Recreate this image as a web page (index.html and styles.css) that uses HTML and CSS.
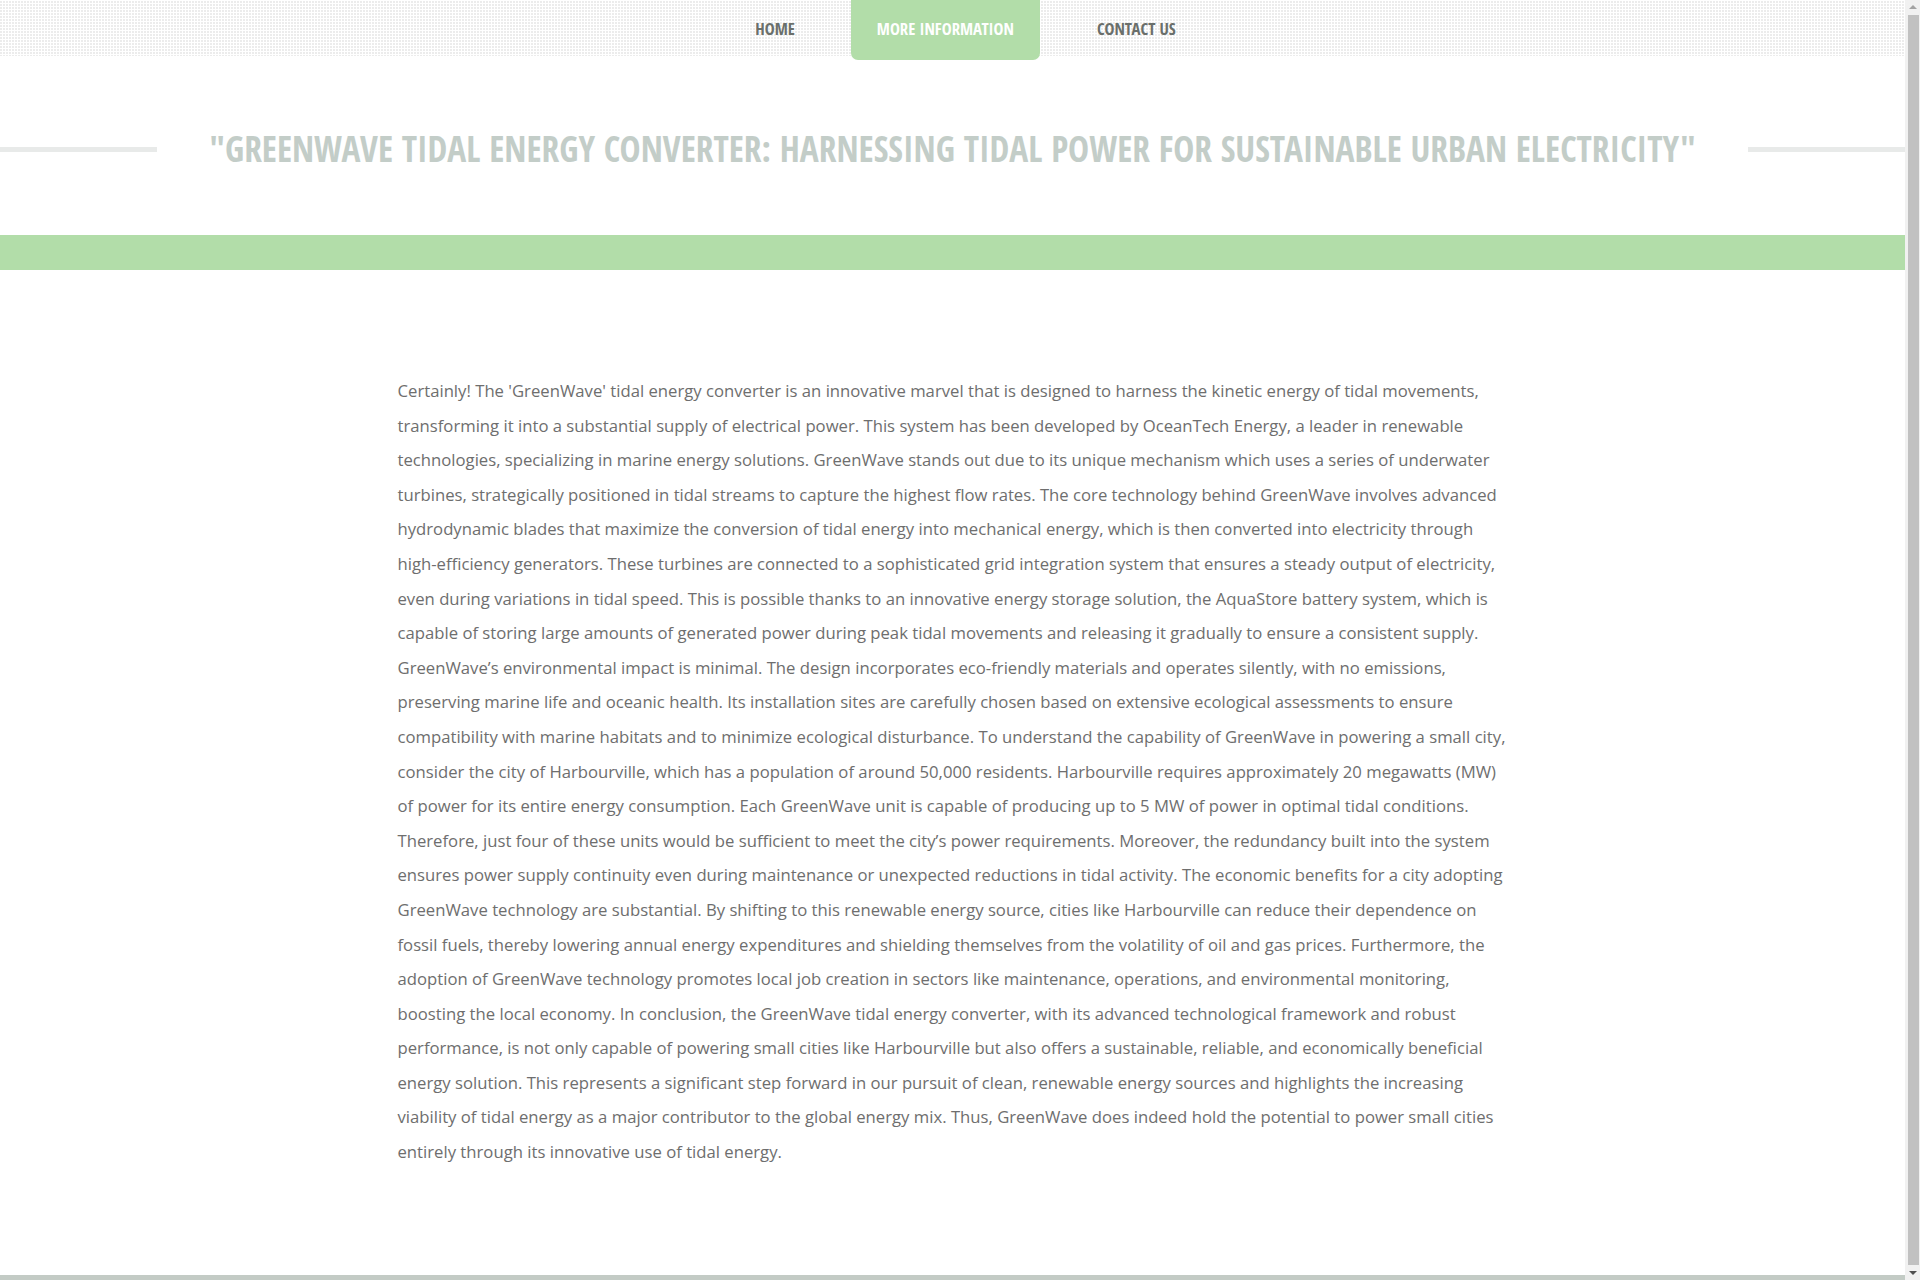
FILE: index.html
```html
<!DOCTYPE html>
<html lang="en">
<head>
<meta charset="utf-8">
<title>GreenWave Tidal Energy Converter</title>
<link rel="stylesheet" href="styles.css">
</head>
<body>
<header class="topbar">
  <nav class="menu">
    <a class="menu-item" href="#">HOME</a>
    <a class="menu-item active" href="#">MORE INFORMATION</a>
    <a class="menu-item" href="#">CONTACT US</a>
  </nav>
</header>
<section class="title-section">
  <span class="rule"></span>
  <h1 class="page-title">"GreenWave Tidal Energy Converter: Harnessing Tidal Power for Sustainable Urban Electricity"</h1>
  <span class="rule"></span>
</section>
<div class="band"></div>
<main class="container">
  <p class="article">Certainly! The 'GreenWave' tidal energy converter is an innovative marvel that is designed to harness the kinetic energy of tidal movements, transforming it into a substantial supply of electrical power. This system has been developed by OceanTech Energy, a leader in renewable technologies, specializing in marine energy solutions. GreenWave stands out due to its unique mechanism which uses a series of underwater turbines, strategically positioned in tidal streams to capture the highest flow rates. The core technology behind GreenWave involves advanced hydrodynamic blades that maximize the conversion of tidal energy into mechanical energy, which is then converted into electricity through high-efficiency generators. These turbines are connected to a sophisticated grid integration system that ensures a steady output of electricity, even during variations in tidal speed. This is possible thanks to an innovative energy storage solution, the AquaStore battery system, which is capable of storing large amounts of generated power during peak tidal movements and releasing it gradually to ensure a consistent supply. GreenWave’s environmental impact is minimal. The design incorporates eco-friendly materials and operates silently, with no emissions, preserving marine life and oceanic health. Its installation sites are carefully chosen based on extensive ecological assessments to ensure compatibility with marine habitats and to minimize ecological disturbance. To understand the capability of GreenWave in powering a small city, consider the city of Harbourville, which has a population of around 50,000 residents. Harbourville requires approximately 20 megawatts (MW) of power for its entire energy consumption. Each GreenWave unit is capable of producing up to 5 MW of power in optimal tidal conditions. Therefore, just four of these units would be sufficient to meet the city’s power requirements. Moreover, the redundancy built into the system ensures power supply continuity even during maintenance or unexpected reductions in tidal activity. The economic benefits for a city adopting GreenWave technology are substantial. By shifting to this renewable energy source, cities like Harbourville can reduce their dependence on fossil fuels, thereby lowering annual energy expenditures and shielding themselves from the volatility of oil and gas prices. Furthermore, the adoption of GreenWave technology promotes local job creation in sectors like maintenance, operations, and environmental monitoring, boosting the local economy. In conclusion, the GreenWave tidal energy converter, with its advanced technological framework and robust performance, is not only capable of powering small cities like Harbourville but also offers a sustainable, reliable, and economically beneficial energy solution. This represents a significant step forward in our pursuit of clean, renewable energy sources and highlights the increasing viability of tidal energy as a major contributor to the global energy mix. Thus, GreenWave does indeed hold the potential to power small cities entirely through its innovative use of tidal energy.</p>
</main>
<footer class="footer"></footer>
<div class="scrollbar" aria-hidden="true">
  <span class="arrow up"></span>
  <span class="thumb"></span>
  <span class="arrow down"></span>
</div>
</body>
</html>
```
FILE: styles.css
```css
html, body {
  margin: 0;
  padding: 0;
}
body {
  margin-right: 15px;
  background: #ffffff;
  font-family: "Open Sans", "Liberation Sans", sans-serif;
  color: #6e6e6e;
}
.topbar {
  height: 56px;
  background-image:
    linear-gradient(90deg, transparent 2px, #ffffff 2px),
    linear-gradient(0deg, transparent 2px, #ffffff 2px);
  background-size: 3px 3px;
  background-color: #ececec;
}
.menu {
  display: flex;
  justify-content: center;
  padding-left: 26px;
  height: 56px;
}
.menu-item {
  display: block;
  padding: 0 26px;
  height: 56px;
  line-height: 57px;
  font-size: 16.7px;
  font-weight: 700;
  font-stretch: 75%;
  font-family: "Open Sans Condensed", "Open Sans", sans-serif;
  color: #6a6f6b;
  text-decoration: none;
}
.menu-item:first-child { margin-right: 30px; }
.menu-item.active {
  background: #b2dda9;
  color: #ffffff;
  height: 60px;
  border-radius: 0 0 7px 7px;
  margin-right: 31px;
}
.title-section {
  display: flex;
  align-items: center;
  gap: 52px;
  margin-top: 70px;
  height: 44px;
  margin-bottom: 65px;
}
.rule {
  flex: 1;
  height: 5px;
  background: #e8eae9;
  margin-top: 3px;
}
.page-title {
  margin: 0;
  font-family: "Open Sans Condensed", "Open Sans", sans-serif;
  font-stretch: 75%;
  font-weight: 700;
  font-size: 35.4px;
  line-height: 44px;
  color: #c3cdc8;
  text-transform: uppercase;
  white-space: nowrap;
}
.band {
  height: 35px;
  background: #b2dda9;
}
.container {
  width: 1110px;
  margin: 0 auto;
  padding: 104px 0 105px;
}
.article {
  margin: 0;
  font-size: 16.7px;
  line-height: 34.6px;
  color: #6e6e6e;
}
.footer {
  height: 5px;
  background: #c3cbc5;
}
.scrollbar {
  position: fixed;
  top: 0;
  right: 0;
  width: 15px;
  height: 100vh;
  background: #f1f1f1;
  display: flex;
  flex-direction: column;
  align-items: center;
}
.arrow {
  flex: none;
  width: 0;
  height: 0;
  border-left: 4px solid transparent;
  border-right: 4px solid transparent;
}
.arrow.up {
  margin: 5px 0 6px;
  border-bottom: 4px solid #a3a3a3;
}
.arrow.down {
  margin: 6px 0 5px;
  border-top: 4px solid #505050;
}
.thumb {
  flex: 1;
  width: 11px;
  margin-left: 1px;
  background: #c1c1c1;
}
```
